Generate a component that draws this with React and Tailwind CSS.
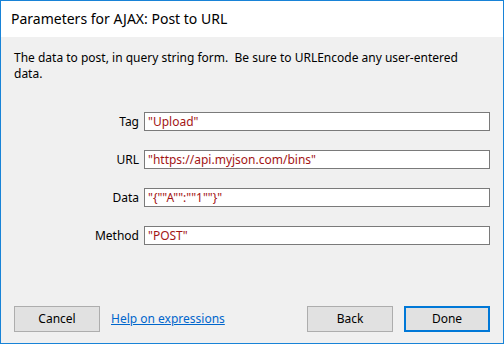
import { useState } from "react";

const fields = [
  { label: "Tag", value: '"Upload"' },
  { label: "URL", value: '"https://api.myjson.com/bins"' },
  { label: "Data", value: '"{""A"":""1""}"' },
  { label: "Method", value: '"POST"' },
];

export default function App() {
  const [values, setValues] = useState(fields.map((f) => f.value));

  return (
    <div
      className="w-[504px] h-[344px] flex flex-col border border-[#1883d7] bg-[#f0f0f0] text-[12px] text-black"
      style={{ fontFamily: '"Noto Sans", "Open Sans", sans-serif' }}
    >
      {/* title bar */}
      <div className="h-[36px] bg-white flex items-center pl-[10px] text-[14px] leading-none">
        Parameters for AJAX: Post to URL
      </div>

      {/* description */}
      <div className="px-[13px] pt-[13px] leading-[16px]">
        <p>The data to post, in query string form.&nbsp; Be sure to URLEncode any user-entered</p>
        <p>data.</p>
      </div>

      {/* fields */}
      <div className="flex flex-col gap-[19px] pt-[30px] pl-[79px] pr-[13px]">
        {fields.map((f, i) => (
          <div key={f.label} className="flex items-center gap-[5px]">
            <label className="w-[59px] text-right">{f.label}</label>
            <input
              className="flex-1 h-[19px] bg-white border border-[#7a7a7a] px-[3px] text-[12px] text-[#a31515] outline-none"
              style={{ fontFamily: '"Noto Sans", "Open Sans", sans-serif' }}
              value={values[i]}
              onChange={(e) => {
                const next = [...values];
                next[i] = e.target.value;
                setValues(next);
              }}
            />
          </div>
        ))}
      </div>

      {/* buttons */}
      <div className="mt-auto flex items-center px-[13px] pb-[11px]">
        <button className="w-[86px] h-[26px] bg-[#e1e1e1] border border-[#adadad]">
          Cancel
        </button>
        <a href="#" className="ml-[11px] text-[#0066cc] underline">
          Help on expressions
        </a>
        <button className="ml-auto w-[86px] h-[26px] bg-[#e1e1e1] border border-[#adadad]">
          Back
        </button>
        <button className="ml-[11px] w-[86px] h-[26px] bg-[#e1e1e1] border-2 border-[#0078d7]">
          Done
        </button>
      </div>
    </div>
  );
}
